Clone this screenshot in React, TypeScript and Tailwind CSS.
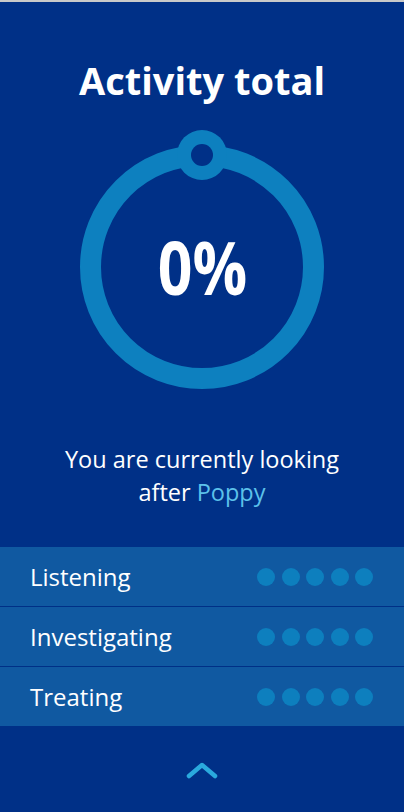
import React from "react";

const rows = ["Listening", "Investigating", "Treating"];

export default function App() {
  return (
    <div className="w-[404px] h-[812px] bg-[#003087] border-t-2 border-[#c9c9c9] flex flex-col overflow-hidden" style={{ fontFamily: '"Open Sans", "Noto Sans", sans-serif' }}>
      <h1 className="mt-[54px] text-center text-white text-[38px] leading-[48px] font-bold">Activity total</h1>
      <div className="mt-[24px] flex justify-center">
        <div className="relative w-[250px] h-[262px]">
          <svg width="250" height="262" viewBox="0 0 250 262" className="absolute inset-0">
            <circle cx="125" cy="139" r="111.5" fill="none" stroke="#0d80bf" strokeWidth="21" />
            <circle cx="125" cy="27" r="25" fill="#0d80bf" />
            <circle cx="125" cy="27" r="11" fill="#003087" />
          </svg>
          <div className="absolute inset-x-0 top-[96px] flex justify-center">
            <span className="inline-block scale-x-[0.82] text-white text-[74px] leading-[86px] font-bold">0%</span>
          </div>
        </div>
      </div>
      <p className="mt-[53px] mx-auto w-[310px] text-center text-white text-[23.5px] leading-[33px]">
        You are currently looking after <span className="text-[#5cc1ea]">Poppy</span>
      </p>
      <div className="mt-[38px] flex flex-col gap-px">
        {rows.map((r) => (
          <div key={r} className="h-[59px] bg-[#1059a1] flex items-center justify-between pl-[30px] pr-[31px]">
            <span className="text-white text-[24px]">{r}</span>
            <div className="flex gap-[6.5px]">
              {[0, 1, 2, 3, 4].map((i) => (
                <span key={i} className="w-[18px] h-[18px] rounded-full bg-[#0d7fbe]" />
              ))}
            </div>
          </div>
        ))}
      </div>
      <div className="mt-[35px] flex justify-center">
        <svg width="32" height="20" viewBox="0 0 32 20">
          <path d="M3 15 L16 4 L29 15" fill="none" stroke="#2aa9dd" strokeWidth="4.5" strokeLinecap="round" strokeLinejoin="round" />
        </svg>
      </div>
    </div>
  );
}
